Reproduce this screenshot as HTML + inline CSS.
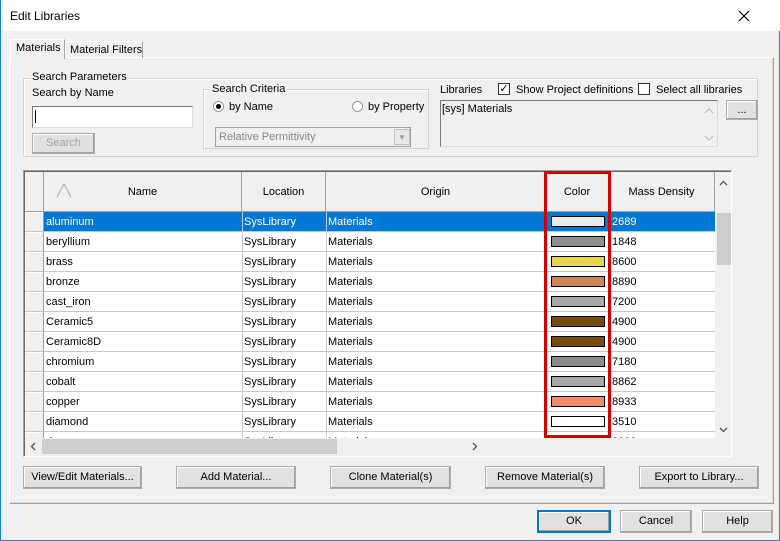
<!DOCTYPE html>
<html><head><style>
*{box-sizing:border-box;margin:0;padding:0}
html{overflow:hidden;width:780px;height:541px}
body{width:780px;height:541px;background:#f0f0f0;font-family:"Liberation Sans",sans-serif;font-size:11px;color:#000;position:relative;overflow:hidden;border:1px solid #1883d7;border-top:none}
.a{position:absolute}
.t{position:absolute;white-space:nowrap}
.btn{position:absolute;background:#e1e1e1;border:1px solid #adadad;text-align:center;line-height:21px;box-shadow:inset -1px -1px 0 #a0a0a0,inset 1px 1px 0 #fff}
.grp{position:absolute;border:1px solid #d5d5d5;box-shadow:1px 1px 0 #fff inset}
.lg{position:absolute;background:#f0f0f0;padding:0 2px;white-space:nowrap}
.row{position:absolute;left:43px;width:671px;height:20px;background:#fff;border-bottom:1px solid #c8c8c8}
.row span{position:absolute;top:4px;white-space:nowrap}
.rh{position:absolute;left:24px;width:19px;height:20px;background:#f0f0f0;border-right:1px solid #a0a0a0;border-bottom:1px solid #c8c8c8;box-shadow:inset 1px 1px 0 #fff}
.sw{position:absolute;left:507px;top:4px;width:54px;height:11px;border:1px solid #000}
.hd{position:absolute;top:172px;height:40px;background:#f0f0f0;border-right:1px solid #a0a0a0;border-bottom:1px solid #a0a0a0;text-align:center;line-height:40px}
</style></head><body>
<div class="a" style="left:0;top:0;width:780px;height:31px;background:#fff"></div>
<div class="t" style="left:9px;top:9px;font-size:12px">Edit Libraries</div>
<svg class="a" style="left:737px;top:10px" width="12" height="12"><path d="M1 1L11 11M11 1L1 11" stroke="#000" stroke-width="1.2"/></svg>

<div class="a" style="left:8px;top:57px;width:765px;height:447px;border:1px solid #fff;border-right-color:#a0a0a0;border-bottom-color:#a0a0a0;box-shadow:inset -1px -1px 0 #d8d8d8"></div>
<div class="a" style="left:9px;top:39px;width:55px;height:20px;background:#f0f0f0;border:1px solid #fff;border-bottom:none;border-right:1px solid #a0a0a0"></div>
<div class="t" style="left:15px;top:42px">Materials</div>
<div class="a" style="left:64px;top:41px;width:78px;height:17px;border:1px solid #fff;border-bottom:none;border-right:1px solid #a0a0a0"></div>
<div class="t" style="left:69px;top:44px">Material Filters</div>

<div class="grp" style="left:22px;top:78px;width:735px;height:79px"></div>
<div class="lg" style="left:29px;top:71px">Search Parameters</div>
<div class="t" style="left:31px;top:87px">Search by Name</div>
<div class="a" style="left:31px;top:106px;width:161px;height:22px;background:#fff;border:1px solid #7a7a7a;border-right-color:#ddd;border-bottom-color:#ddd"></div>
<div class="a" style="left:34px;top:110px;width:1px;height:13px;background:#000"></div>
<div class="btn" style="left:31px;top:133px;width:63px;height:21px;color:#a0a0a0;line-height:18px">Search</div>

<div class="grp" style="left:202px;top:89px;width:226px;height:60px"></div>
<div class="lg" style="left:209px;top:83px">Search Criteria</div>
<div class="a" style="left:212px;top:101px;width:11px;height:11px;border-radius:50%;border:1px solid #999;background:#fff"></div>
<div class="a" style="left:215px;top:104px;width:5px;height:5px;border-radius:50%;background:#000"></div>
<div class="t" style="left:228px;top:101px">by Name</div>
<div class="a" style="left:351px;top:101px;width:11px;height:11px;border-radius:50%;border:1px solid #999;background:#fff"></div>
<div class="t" style="left:367px;top:101px">by Property</div>
<div class="a" style="left:214px;top:127px;width:196px;height:20px;border:1px solid #a0a0a0;background:#f0f0f0"></div>
<div class="t" style="left:218px;top:131px;color:#888">Relative Permittivity</div>
<div class="a" style="left:393px;top:129px;width:16px;height:16px;border:1px solid #c0c0c0;background:#e8e8e8;font-size:8px;color:#999;text-align:center;line-height:15px">▼</div>

<div class="t" style="left:439px;top:84px">Libraries</div>
<div class="a" style="left:497px;top:83px;width:12px;height:12px;border:1px solid #333;background:#fff;font-size:11px;line-height:10px;text-align:center">✓</div>
<div class="t" style="left:515px;top:84px">Show Project definitions</div>
<div class="a" style="left:637px;top:83px;width:12px;height:12px;border:1px solid #333;background:#fff"></div>
<div class="t" style="left:655px;top:84px">Select all libraries</div>
<div class="a" style="left:439px;top:100px;width:278px;height:47px;border:1px solid #7a7a7a;border-right-color:#ddd;border-bottom-color:#ddd;background:#f0f0f0"></div>
<div class="t" style="left:441px;top:103px">[sys] Materials</div>
<svg class="a" style="left:703px;top:108px" width="10" height="6"><path d="M1 5L5 1L9 5" stroke="#bbb" fill="none"/></svg>
<svg class="a" style="left:703px;top:135px" width="10" height="6"><path d="M1 1L5 5L9 1" stroke="#bbb" fill="none"/></svg>
<div class="btn" style="left:725px;top:100px;width:32px;height:20px;line-height:18px">...</div>

<div class="a" style="left:22px;top:170px;width:709px;height:287px;border:1px solid #a0a0a0;background:#f0f0f0;border-right-color:#fff;border-bottom-color:#fff;box-shadow:inset 1px 1px 0 #696969"></div>
<div class="hd" style="left:24px;width:19px"></div>
<div class="hd" style="left:43px;width:198px">Name</div>
<svg class="a" style="left:55px;top:182px" width="16" height="16"><path d="M1 15L8 2L15 15" stroke="#aaa" fill="none"/></svg>
<div class="hd" style="left:241px;width:84px">Location</div>
<div class="hd" style="left:325px;width:220px">Origin</div>
<div class="hd" style="left:545px;width:63px">Color</div>
<div class="hd" style="left:608px;width:106px">Mass Density</div>

<div class="a" style="left:24px;top:212px;width:690px;height:226px;overflow:hidden">
<div style="position:absolute;left:-24px;top:-212px;width:780px;height:460px">
<div class="rh" style="top:212px"></div><div class="row" style="top:212px;background:#0078d7;color:#fff"><span style="left:2px">aluminum</span><span style="left:200px">SysLibrary</span><span style="left:284px">Materials</span><div class="sw" style="background:#e6eaeb"></div><span style="left:568px">2689</span></div>
<div class="rh" style="top:232px"></div><div class="row" style="top:232px"><span style="left:2px">beryllium</span><span style="left:200px">SysLibrary</span><span style="left:284px">Materials</span><div class="sw" style="background:#8f8f8f"></div><span style="left:568px">1848</span></div>
<div class="rh" style="top:252px"></div><div class="row" style="top:252px"><span style="left:2px">brass</span><span style="left:200px">SysLibrary</span><span style="left:284px">Materials</span><div class="sw" style="background:#e8d44f"></div><span style="left:568px">8600</span></div>
<div class="rh" style="top:272px"></div><div class="row" style="top:272px"><span style="left:2px">bronze</span><span style="left:200px">SysLibrary</span><span style="left:284px">Materials</span><div class="sw" style="background:#cf8652"></div><span style="left:568px">8890</span></div>
<div class="rh" style="top:292px"></div><div class="row" style="top:292px"><span style="left:2px">cast_iron</span><span style="left:200px">SysLibrary</span><span style="left:284px">Materials</span><div class="sw" style="background:#a8a8a8"></div><span style="left:568px">7200</span></div>
<div class="rh" style="top:312px"></div><div class="row" style="top:312px"><span style="left:2px">Ceramic5</span><span style="left:200px">SysLibrary</span><span style="left:284px">Materials</span><div class="sw" style="background:#754c0a"></div><span style="left:568px">4900</span></div>
<div class="rh" style="top:332px"></div><div class="row" style="top:332px"><span style="left:2px">Ceramic8D</span><span style="left:200px">SysLibrary</span><span style="left:284px">Materials</span><div class="sw" style="background:#754c0a"></div><span style="left:568px">4900</span></div>
<div class="rh" style="top:352px"></div><div class="row" style="top:352px"><span style="left:2px">chromium</span><span style="left:200px">SysLibrary</span><span style="left:284px">Materials</span><div class="sw" style="background:#8c8c8c"></div><span style="left:568px">7180</span></div>
<div class="rh" style="top:372px"></div><div class="row" style="top:372px"><span style="left:2px">cobalt</span><span style="left:200px">SysLibrary</span><span style="left:284px">Materials</span><div class="sw" style="background:#a6a6a2"></div><span style="left:568px">8862</span></div>
<div class="rh" style="top:392px"></div><div class="row" style="top:392px"><span style="left:2px">copper</span><span style="left:200px">SysLibrary</span><span style="left:284px">Materials</span><div class="sw" style="background:#f28b6a"></div><span style="left:568px">8933</span></div>
<div class="rh" style="top:412px"></div><div class="row" style="top:412px"><span style="left:2px">diamond</span><span style="left:200px">SysLibrary</span><span style="left:284px">Materials</span><div class="sw" style="background:#fff"></div><span style="left:568px">3510</span></div>
<div class="rh" style="top:432px"></div><div class="row" style="top:432px"><span style="left:2px">dummy</span><span style="left:200px">SysLibrary</span><span style="left:284px">Materials</span><span style="left:568px">2000</span></div>
</div></div>
<div class="a" style="left:241px;top:212px;width:1px;height:226px;background:#c8c8c8"></div>
<div class="a" style="left:325px;top:212px;width:1px;height:226px;background:#c8c8c8"></div>
<div class="a" style="left:608px;top:212px;width:1px;height:226px;background:#c8c8c8"></div>
<div class="a" style="left:714px;top:172px;width:16px;height:266px;background:#f0f0f0"></div>
<div class="a" style="left:716px;top:213px;width:14px;height:52px;background:#cdcdcd"></div>
<svg class="a" style="left:718px;top:180px" width="9" height="6"><path d="M1 5L4.5 1.5L8 5" stroke="#555" stroke-width="1.3" fill="none"/></svg>
<svg class="a" style="left:718px;top:427px" width="9" height="6"><path d="M1 1L4.5 4.5L8 1" stroke="#555" stroke-width="1.3" fill="none"/></svg>
<div class="a" style="left:24px;top:438px;width:690px;height:17px;background:#f0f0f0"></div>
<div class="a" style="left:41px;top:439px;width:295px;height:15px;background:#cdcdcd"></div>
<svg class="a" style="left:29px;top:442px" width="6" height="9"><path d="M5 1L1.5 4.5L5 8" stroke="#555" stroke-width="1.3" fill="none"/></svg>
<svg class="a" style="left:471px;top:442px" width="6" height="9"><path d="M1 1L4.5 4.5L1 8" stroke="#555" stroke-width="1.3" fill="none"/></svg>
<div class="a" style="left:543px;top:171px;width:67px;height:267px;border:3px solid #d20000"></div>

<div class="btn" style="left:22px;top:466px;width:119px;height:23px">View/Edit Materials...</div>
<div class="btn" style="left:175px;top:466px;width:120px;height:23px">Add Material...</div>
<div class="btn" style="left:329px;top:466px;width:121px;height:23px">Clone Material(s)</div>
<div class="btn" style="left:484px;top:466px;width:120px;height:23px">Remove Material(s)</div>
<div class="btn" style="left:638px;top:466px;width:120px;height:23px">Export to Library...</div>

<div class="btn" style="left:536px;top:510px;width:74px;height:23px;border:2px solid #0078d7;line-height:19px">OK</div>
<div class="btn" style="left:619px;top:510px;width:72px;height:23px">Cancel</div>
<div class="btn" style="left:701px;top:510px;width:71px;height:23px">Help</div>
</body></html>
